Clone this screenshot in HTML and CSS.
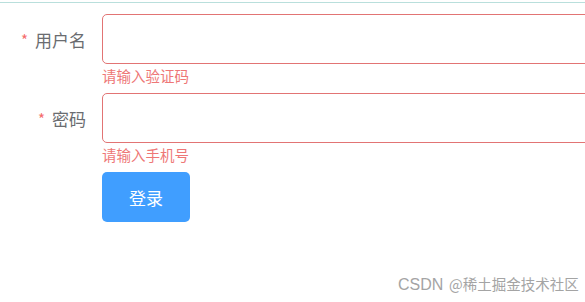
FILE: index.html
```html
<!DOCTYPE html>
<html lang="zh-CN">

<head>
    <meta charset="UTF-8">
    <meta name="viewport" content="width=device-width, initial-scale=1.0">
    <title>登录</title>
    <link rel="stylesheet" href="styles.css">
</head>

<body>
    <div class="topline"></div>
    <form class="login">
        <div class="item">
            <label class="label"><span class="star">*</span>用户名</label>
            <div class="field">
                <input class="input" type="text">
                <div class="error">请输入验证码</div>
            </div>
        </div>
        <div class="item">
            <label class="label"><span class="star">*</span>密码</label>
            <div class="field">
                <input class="input" type="password">
                <div class="error">请输入手机号</div>
            </div>
        </div>
        <div class="item">
            <div class="label"></div>
            <div class="field">
                <button type="button" class="btn">登录</button>
            </div>
        </div>
    </form>
    <div class="mark">
        <span class="csdn">CSDN</span>
        <span class="who">@稀土掘金技术社区</span>
    </div>
</body>

</html>
```

FILE: styles.css
```css
body {
    margin: 0;
    font-family: "Noto Sans CJK SC", "Liberation Sans", sans-serif;
    background: #fff;
    overflow: hidden;
    height: 302px;
    position: relative;
}

.topline {
    margin-top: 2px;
    border-top: 1px solid #b9dfdc;
}

.login {
    padding-top: 11px;
}

.item {
    display: flex;
}

.label {
    width: 86px;
    flex-shrink: 0;
    padding-right: 16px;
    height: 50px;
    display: flex;
    align-items: center;
    justify-content: flex-end;
    font-size: 17px;
    color: #6a6c70;
}

.star {
    color: #f56c6c;
    font-size: 15px;
    margin-right: 7px;
}

.field {
    width: 520px;
    flex-shrink: 0;
}

.input {
    display: block;
    box-sizing: border-box;
    width: 100%;
    height: 50px;
    margin: 0;
    border: 1px solid #e27474;
    border-radius: 5px;
    outline: none;
    background: #fff;
}

.error {
    padding-top: 3px;
    height: 26px;
    line-height: 18px;
    font-size: 14.5px;
    color: #ee7777;
}

.btn {
    width: 88px;
    height: 50px;
    border: none;
    border-radius: 5px;
    background: #409eff;
    color: #fff;
    font-family: inherit;
    font-size: 17px;
    cursor: pointer;
}

.mark {
    position: absolute;
    left: 398px;
    top: 272px;
    white-space: nowrap;
    color: #a4a4a4;
    font-size: 16px;
    line-height: 22px;
}

.csdn {
    font-family: "Liberation Sans", sans-serif;
}

.who {
    font-size: 14.5px;
    margin-left: 2px;
}
```
